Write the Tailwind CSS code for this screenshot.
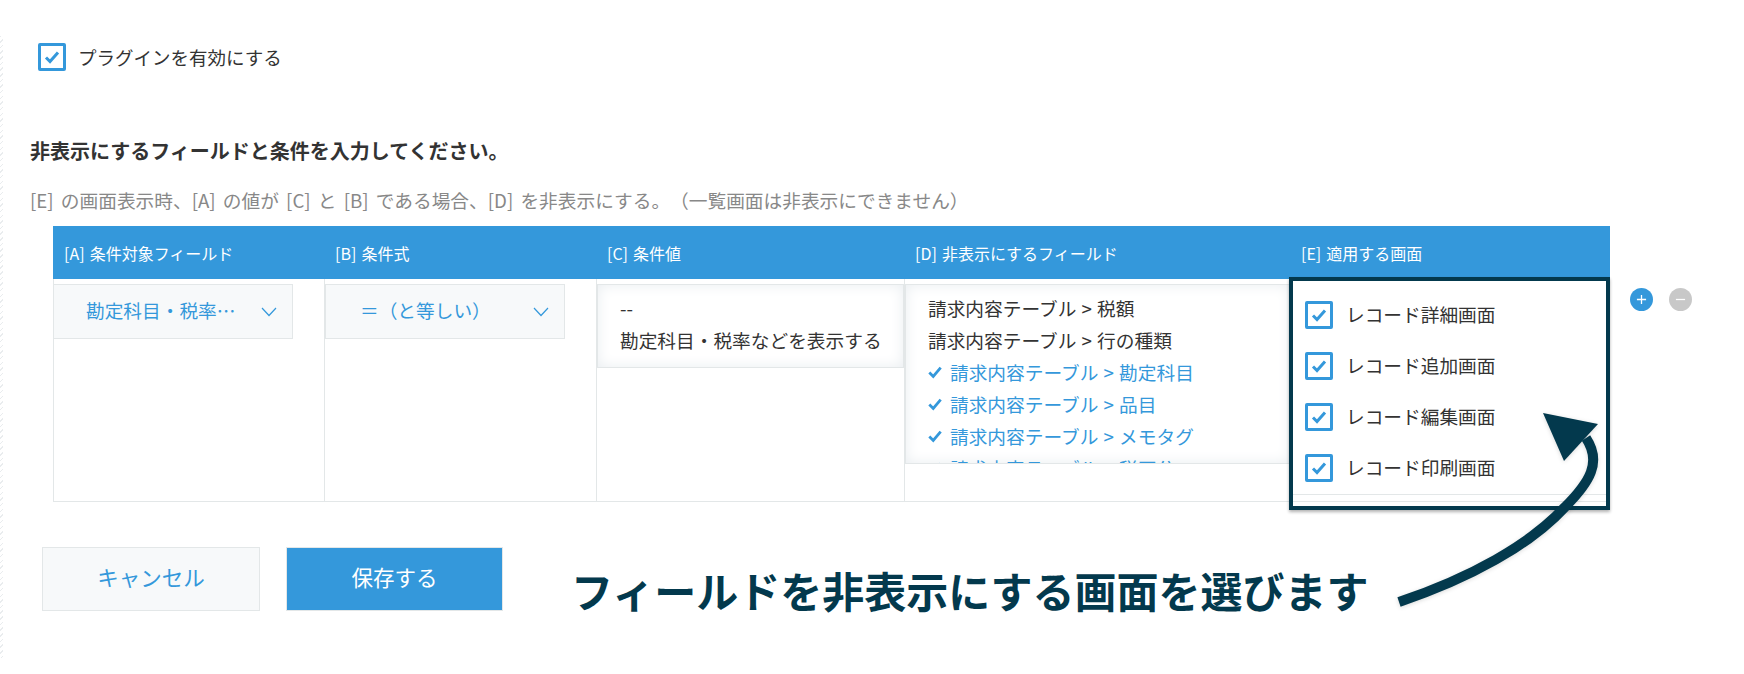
<!DOCTYPE html>
<html lang="ja">
<head>
    <meta charset="UTF-8">
    <title>プラグイン設定</title>
    <script src="https://cdn.jsdelivr.net/npm/@tailwindcss/browser@4"></script>
</head>
<body class="bg-white text-[#333] font-['Noto_Sans_CJK_JP','Noto_Sans',sans-serif] [text-spacing-trim:space-all]">
<div class="relative w-[1744px] h-[674px] overflow-hidden pl-[30px] pt-[43px]">
    <!-- hatch on the left edge -->
    <div class="absolute left-0 top-[36px] w-[3px] h-[622px] bg-[repeating-linear-gradient(135deg,#e9ecee_0,#e9ecee_1px,#fff_1px,#fff_4px)]"></div>

    <label class="flex items-center gap-[12px] ml-[8px] h-[28px]">
        <span class="w-[28px] h-[28px] border-[3px] border-[#3498db] rounded-[2px] flex items-center justify-center">
            <svg viewBox="0 0 16 16" class="w-[16px] h-[16px]" fill="none" stroke="#3498db" stroke-width="3"><path d="M2 8.5l4 4 8-9"/></svg>
        </span>
        <span class="text-[18.5px] leading-[28px]">プラグインを有効にする</span>
    </label>

    <h2 class="text-[20px] font-bold leading-[28px] mt-[66px]">非表示にするフィールドと条件を入力してください。</h2>
    <p class="text-[18.7px] leading-[28px] text-[#888] mt-[21px] [word-spacing:3px]">[E] の画面表示時、[A] の値が [C] と [B] である場合、[D] を非表示にする。（一覧画面は非表示にできません）</p>

    <div class="ml-[23px] mt-[12px] w-[1557px] relative">
        <div class="flex h-[53px] bg-[#3498db] text-white text-[16px] items-center [word-spacing:1.5px]">
            <div class="w-[271px] pl-[11px]">[A] 条件対象フィールド</div>
            <div class="w-[272px] pl-[11px]">[B] 条件式</div>
            <div class="w-[308px] pl-[11px]">[C] 条件値</div>
            <div class="w-[386px] pl-[11px]">[D] 非表示にするフィールド</div>
            <div class="w-[320px] pl-[11px]">[E] 適用する画面</div>
        </div>
        <div class="flex h-[223px] border-b border-[#e3e7e8] border-l text-[18.7px]">
            <div class="w-[271px] border-r border-[#e3e7e8] pt-[5px]">
                <div class="w-[240px] h-[55px] -ml-px bg-[#f7f9fa] border border-[#e3e7e8] flex items-center justify-between pl-[32px] pr-[15px] text-[#3498db]">
                    <span class="pb-[3px]">勘定科目・税率…</span>
                    <svg viewBox="0 0 16 10" class="w-[16px] h-[10px]" fill="none" stroke="#3498db" stroke-width="1.2"><path d="M1 1l7 7.5L15 1"/></svg>
                </div>
            </div>
            <div class="w-[272px] border-r border-[#e3e7e8] pt-[5px]">
                <div class="w-[240px] h-[55px] bg-[#f7f9fa] border border-[#e3e7e8] flex items-center justify-between pl-[34px] pr-[15px] text-[#3498db]">
                    <span class="pb-[3px]">＝（と等しい）</span>
                    <svg viewBox="0 0 16 10" class="w-[16px] h-[10px]" fill="none" stroke="#3498db" stroke-width="1.2"><path d="M1 1l7 7.5L15 1"/></svg>
                </div>
            </div>
            <div class="w-[308px] border-r border-[#e3e7e8] pt-[5px]">
                <div class="h-[84px] border border-[#e3e7e8] bg-white shadow-[inset_0_0_14px_#e9edf0] pl-[22px] py-[7px] leading-[32px] whitespace-nowrap">
                    <div>--</div>
                    <div>勘定科目・税率などを表示する</div>
                </div>
            </div>
            <div class="w-[386px] pt-[5px]">
                <div class="h-[180px] overflow-hidden border border-[#e3e7e8] bg-white shadow-[inset_0_0_14px_#e9edf0] px-[22px] py-[7px] leading-[32px] [word-spacing:1px]">
                    <div>請求内容テーブル &gt; 税額</div>
                    <div>請求内容テーブル &gt; 行の種類</div>
                    <div class="flex items-center gap-[8px] text-[#3498db]"><svg viewBox="0 0 16 16" class="w-[14px] h-[14px]" fill="none" stroke="#3498db" stroke-width="3.2"><path d="M1.5 8.5l4.5 4.5 8.5-10"/></svg>請求内容テーブル &gt; 勘定科目</div>
                    <div class="flex items-center gap-[8px] text-[#3498db]"><svg viewBox="0 0 16 16" class="w-[14px] h-[14px]" fill="none" stroke="#3498db" stroke-width="3.2"><path d="M1.5 8.5l4.5 4.5 8.5-10"/></svg>請求内容テーブル &gt; 品目</div>
                    <div class="flex items-center gap-[8px] text-[#3498db]"><svg viewBox="0 0 16 16" class="w-[14px] h-[14px]" fill="none" stroke="#3498db" stroke-width="3.2"><path d="M1.5 8.5l4.5 4.5 8.5-10"/></svg>請求内容テーブル &gt; メモタグ</div>
                    <div class="flex items-center gap-[8px] text-[#3498db]"><svg viewBox="0 0 16 16" class="w-[14px] h-[14px]" fill="none" stroke="#3498db" stroke-width="3.2"><path d="M1.5 8.5l4.5 4.5 8.5-10"/></svg>請求内容テーブル &gt; 税区分</div>
                </div>
            </div>
            <div class="w-[319px] pt-[10px] pl-[14px] bg-white z-10">
                <div class="flex flex-col">
                    <div class="flex items-center gap-[13px] h-[51px]"><span class="w-[28px] h-[28px] border-[3px] border-[#3498db] rounded-[2px] flex items-center justify-center"><svg viewBox="0 0 16 16" class="w-[16px] h-[16px]" fill="none" stroke="#3498db" stroke-width="3"><path d="M2 8.5l4 4 8-9"/></svg></span>レコード詳細画面</div>
                    <div class="flex items-center gap-[13px] h-[51px]"><span class="w-[28px] h-[28px] border-[3px] border-[#3498db] rounded-[2px] flex items-center justify-center"><svg viewBox="0 0 16 16" class="w-[16px] h-[16px]" fill="none" stroke="#3498db" stroke-width="3"><path d="M2 8.5l4 4 8-9"/></svg></span>レコード追加画面</div>
                    <div class="flex items-center gap-[13px] h-[51px]"><span class="w-[28px] h-[28px] border-[3px] border-[#3498db] rounded-[2px] flex items-center justify-center"><svg viewBox="0 0 16 16" class="w-[16px] h-[16px]" fill="none" stroke="#3498db" stroke-width="3"><path d="M2 8.5l4 4 8-9"/></svg></span>レコード編集画面</div>
                    <div class="flex items-center gap-[13px] h-[51px]"><span class="w-[28px] h-[28px] border-[3px] border-[#3498db] rounded-[2px] flex items-center justify-center"><svg viewBox="0 0 16 16" class="w-[16px] h-[16px]" fill="none" stroke="#3498db" stroke-width="3"><path d="M2 8.5l4 4 8-9"/></svg></span>レコード印刷画面</div>
                </div>
                <div class="border-t border-[#e3e7e8] mt-[1px] -ml-[14px]"></div>
            </div>
        </div>

        <!-- add / remove row -->
        <div class="absolute left-[1577px] top-[62px] flex gap-[16px]">
            <span class="w-[23px] h-[23px] rounded-full bg-[#3498db] flex items-center justify-center"><svg viewBox="0 0 12 12" class="w-[11px] h-[11px]" stroke="#fff" stroke-width="1.4"><path d="M6 1v10M1 6h10"/></svg></span>
            <span class="w-[23px] h-[23px] rounded-full bg-[#c8c8c8] flex items-center justify-center"><svg viewBox="0 0 12 12" class="w-[11px] h-[11px]" stroke="#fff" stroke-width="1.4"><path d="M1 6h10"/></svg></span>
        </div>
    </div>

    <div class="flex gap-[26px] ml-[12px] mt-[45px]">
        <button class="w-[218px] h-[64px] pb-[3px] bg-[#f7f9fa] border border-[#e3e7e8] text-[#3498db] text-[21.5px]">キャンセル</button>
        <button class="w-[217px] h-[64px] pb-[3px] bg-[#3498db] border border-[#e3e7e8] text-white text-[21.5px]">保存する</button>
    </div>

    <!-- annotation on top of the screenshot -->
    <div class="absolute left-[1289px] top-[277px] w-[321px] h-[233px] border-[4px] border-[#03394d] shadow-[0_2px_3px_rgba(0,0,0,0.3)] z-20"></div>
    <div class="absolute left-[571px] top-[562px] text-[42px] leading-[56px] font-bold text-[#03394d] z-20">フィールドを非表示にする画面を選びます</div>
    <svg class="absolute left-0 top-0 z-30 drop-shadow-sm" width="1744" height="674" viewBox="0 0 1744 674" fill="none">
        <path d="M1399 602C1470 578 1530 545 1565 507C1590 482 1602 462 1586 438" stroke="#03394d" stroke-width="10"/>
        <path d="M1543 413L1598 424L1564 461Z" fill="#03394d"/>
    </svg>
</div>
</body>
</html>
